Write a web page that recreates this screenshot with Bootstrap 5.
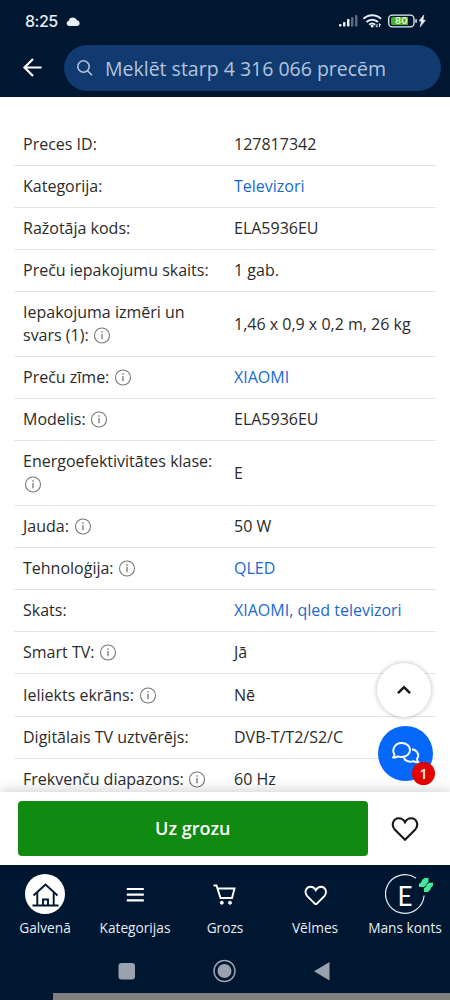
<!DOCTYPE html>
<html lang="lv">
<head>
<meta charset="utf-8">
<meta name="viewport" content="width=device-width, initial-scale=1">
<title>Preces apraksts</title>
<link href="https://cdn.jsdelivr.net/npm/bootstrap@5.3.0/dist/css/bootstrap.min.css" rel="stylesheet">
<style>
body{font-family:"Open Sans","Noto Sans",sans-serif;font-size:16px;color:#2b2b2b;background:#fff}
svg{display:block;flex:none}
.app{height:1000px}
.navy{background:#001731}
.top-area{height:97px}
.status{height:42px;padding:0 24px 0 25px;color:#e9eef6}
.clock{font-family:Inter,sans-serif;font-weight:500;font-size:16px;letter-spacing:-.5px;line-height:20px}
.searchrow{height:52px;padding:0 9px 0 22px}
.search{height:46px;background:#103a70;color:#b3c4de;font-size:19.5px;padding-left:12px;margin-left:21px}
.search span{padding-top:2px;margin-left:11px}
.specs{padding:26.85px 14px 0}
.spec{min-height:42.07px;border-bottom:1px solid #e4e4e4;padding:0 9px;line-height:23px}
.spec.tall{min-height:65px}
.spec-name{width:211px}
.spec a{color:#1a69d2}
.info{display:inline-block;vertical-align:-3px;margin-left:.5px}
.buybar{height:73px;padding:0 31px 0 18px;box-shadow:0 -2px 12px rgba(0,0,0,.18);z-index:2}
.buy{width:349.5px;height:55px;border-radius:4px;background:#108a10;color:#fff;font-weight:600;font-size:18px;border:0}
.float-btns{right:17px;bottom:11px;z-index:1}
.up{width:54px;height:54px;background:#fff;box-shadow:0 0 5px rgba(0,0,0,.28);margin-right:2px}
.chat{width:55px;height:55px;background:#0667fb;margin-top:9px}
.count{width:23px;height:23px;right:-2px;bottom:-4px;background:#e60000;font-size:14px;font-weight:600;line-height:23px}
.tabs{height:79px;color:#e6edf6;font-size:13.7px}
.tab-cell{width:90px;padding-top:9px}
.tab-ico{height:40px;width:40px}
.tab-cell span{line-height:20px;margin-top:4px;white-space:nowrap}
.sys{height:49px;padding-top:3px}
.strip{height:7px;background:#808080;margin-left:53px}
</style>
</head>
<body>
<div class="app d-flex flex-column overflow-hidden">
  <header class="navy top-area flex-shrink-0">
    <div class="status d-flex align-items-center">
      <span class="clock">8:25</span>
      <svg class="ms-2" width="15" height="9" viewBox="0 0 15 9" fill="#e9eef6"><path d="M3 9a2.7 2.7 0 0 1-.3-5.3A4.4 4.4 0 0 1 11 3.300A2.900 2.900 0 0 1 11.500 9z"/></svg>
      <div class="ms-auto d-flex align-items-center">
        <svg width="88" height="18" viewBox="0 0 88 18">
          <g fill="#e9eef6"><rect x="1" y="12" width="2.500" height="2.500" rx=".8"/><rect x="5" y="10" width="2.500" height="4.500" rx=".8"/><rect x="9" y="7" width="2.500" height="7.500" rx=".8"/></g>
          <g fill="#59697e"><rect x="13" y="5" width="2.500" height="9.500" rx=".8"/><rect x="17" y="3" width="2.500" height="11.500" rx=".8"/></g>
          <g fill="none" stroke="#e9eef6" stroke-width="2"><path d="M25.500 6.800a12.500 12.500 0 0 1 17.500 0M28.500 10a8.200 8.200 0 0 1 11.500 0M31.200 12.700a4.300 4.300 0 0 1 6 0"/></g><circle cx="34.200" cy="14" r="1.500" fill="#e9eef6"/><path d="M39 12v3M37.600 13.800l1.400 1.500M41.500 15v-3.300M41.500 11.500l1.400 1.600" stroke="#e9eef6" stroke-width="1"/>
          <rect x="50.700" y="3.200" width="25.300" height="11.600" rx="3.500" fill="none" stroke="#e9eef6" stroke-width="1.300"/>
          <path d="M55 5h15v8H55a2 2 0 0 1-2-2V7a2 2 0 0 1 2-2z" fill="#44b522"/><rect x="77.300" y="7" width="1.500" height="4" rx=".7" fill="#e9eef6"/>
          <text x="63.300" y="12.400" text-anchor="middle" font-family="Inter,sans-serif" font-size="9.500" font-weight="600" fill="#f1f8e9">80</text>
          <path d="M85.800 3 81 9h2.500L82.200 14.800 87.400 8.300H85z" fill="#e9eef6" stroke="#e9eef6" stroke-width=".6"/>
        </svg>
      </div>
    </div>
    <div class="searchrow d-flex align-items-center">
      <svg width="21" height="20" viewBox="0 0 21 20" fill="none" stroke="#fff" stroke-width="2.200"><path d="M19.500 9.500H3M11 1 2.500 9.500l8.500 8.500"/></svg>
      <div class="search rounded-pill flex-grow-1 d-flex align-items-center">
        <svg width="18" height="18" viewBox="0 0 18 18" fill="none" stroke="#b3c4de" stroke-width="1.600"><circle cx="7.500" cy="7.500" r="5.700"/><path d="m11.500 11.700 4.500 4.500"/></svg>
        <span class="text-nowrap">Meklēt starp 4 316 066 precēm</span>
      </div>
    </div>
  </header>

  <main class="flex-grow-1 position-relative overflow-hidden">
    <div class="specs" id="specs"></div>
    <div class="float-btns position-absolute d-flex flex-column align-items-end">
      <div class="up rounded-circle d-flex align-items-center justify-content-center"><svg width="16" height="10" viewBox="0 0 16 10" fill="none" stroke="#161616" stroke-width="2.500"><path d="m2 8.200 6-6 6 6"/></svg></div>
      <div class="chat rounded-circle d-flex align-items-center justify-content-center position-relative">
        <svg width="30" height="25" viewBox="0 0 30 25" fill="none" stroke="#fff" stroke-width="1.900" stroke-linejoin="round"><path d="M2 16.500c1.200-1 1.500-2 1.400-3C.5 8.500 4 2 10.500 2c5 0 8.500 3 8.500 7s-3.500 7-8.500 7c-1.500 0-2.500-.2-3.500-.6-1.500.9-3 1.300-5 1.100z"/><path d="M21 8.200c5 .5 8 5.500 5 9.600-.1 1.200.4 2.300 1.500 3.400-2 .2-3.500-.2-5-1.100-4 1.500-8.500 0-9.700-3.500"/></svg>
        <span class="count position-absolute rounded-circle text-white text-center">1</span>
      </div>
    </div>
  </main>

  <section class="buybar flex-shrink-0 bg-white d-flex align-items-center justify-content-between position-relative">
    <button class="buy btn p-0">Uz grozu</button>
    <svg width="28" height="26" viewBox="0 0 28 26" fill="none" stroke="#161616" stroke-width="2.100"><path d="M14 23.800 3.500 13.200C0 9 2.300 2.300 7.800 2.300c2.700 0 4.900 1.500 6.200 4 1.300-2.500 3.500-4 6.200-4 5.500 0 7.800 6.700 4.300 10.900z"/></svg>
  </section>

  <footer class="navy flex-shrink-0">
    <nav class="tabs d-flex">
      <div class="tab-cell d-flex flex-column align-items-center"><div class="tab-ico rounded-circle bg-white d-flex align-items-center justify-content-center"><svg width="28" height="26" viewBox="0 0 28 26" fill="none" stroke="#001731" stroke-width="1.900"><path d="m2.500 14.500 12-11 12 11M6.300 11.500v12.300M22.700 11.500v12.300M1.500 24.500h26M12 24v-5.500h5V24"/></svg></div><span>Galvenā</span></div>
      <div class="tab-cell d-flex flex-column align-items-center"><div class="tab-ico d-flex align-items-center justify-content-center"><svg width="18" height="16" viewBox="0 0 18 16" stroke="#fff" stroke-width="2.200"><path d="M.8 3h17M.8 8.700h17M.8 14.400h17"/></svg></div><span>Kategorijas</span></div>
      <div class="tab-cell d-flex flex-column align-items-center"><div class="tab-ico d-flex align-items-center justify-content-center"><svg width="24" height="22" viewBox="0 0 24 22" fill="none" stroke="#fff" stroke-width="1.900"><path d="M.5 2.500h3L7.500 15H19l2.500-9.500h-17"/><circle cx="8.800" cy="19.700" r="1.500" fill="#fff" stroke-width="1"/><circle cx="17" cy="19.700" r="1.500" fill="#fff" stroke-width="1"/></svg></div><span>Grozs</span></div>
      <div class="tab-cell d-flex flex-column align-items-center"><div class="tab-ico d-flex align-items-center justify-content-center"><svg width="24" height="22" viewBox="0 0 24 22" fill="none" stroke="#fff" stroke-width="1.900"><path d="M12.800 21.700 4 12.800C1 9.200 3 3.700 7.500 3.700c2.300 0 4.200 1.300 5.300 3.400 1.100-2.100 3-3.400 5.300-3.400 4.500 0 6.300 5.500 3.500 9.100z"/></svg></div><span>Vēlmes</span></div>
      <div class="tab-cell d-flex flex-column align-items-center"><div class="tab-ico"><svg width="50" height="40" viewBox="0 0 50 40"><path d="M31 4.200A19.300 19.300 0 1 0 39.100 21.500" fill="none" stroke="#e6edf6" stroke-width="1.200"/><text x="20" y="32.300" text-anchor="middle" font-family="Lato,sans-serif" font-size="26" fill="#fff">E</text><g fill="#46e696"><path d="M34 13V9.800l1.300-.6L37.500 5.500 39.500 4h4v4.300l-1.500.6-1.500 3L38.500 13z"/><path d="M48 8.800V12l-1.300.7-2 3.800-2 1.500H39v-4.200l1.500-.6 1.500-3.200 2-1.200z"/></g></svg></div><span>Mans konts</span></div>
    </nav>
    <div class="sys d-flex">
      <svg class="w-100" height="48" viewBox="0 0 450 48" fill="#99a2ad"><rect x="118.500" y="16" width="16.500" height="16.500" rx="3"/><circle cx="224.500" cy="24" r="7"/><circle cx="224.500" cy="24" r="10.500" fill="none" stroke="#99a2ad" stroke-width="1.500"/><path d="M314 24.300 329.500 15v18.500z"/></svg>
    </div>
    <div class="strip"></div>
  </footer>
</div>
<script>
const rows = [
  ["Preces ID:", "127817342"],
  ["Kategorija:", "Televizori", {link:1}],
  ["Ražotāja kods:", "ELA5936EU"],
  ["Preču iepakojumu skaits:", "1 gab."],
  ["Iepakojuma izmēri un<br>svars (1):", "1,46 x 0,9 x 0,2 m, 26 kg", {info:1, tall:1}],
  ["Preču zīme:", "XIAOMI", {info:1, link:1}],
  ["Modelis:", "ELA5936EU", {info:1}],
  ["Energoefektivitātes klase:<br>", "E", {info:1, tall:1, flush:1}],
  ["Jauda:", "50 W", {info:1}],
  ["Tehnoloģija:", "QLED", {info:1, link:1}],
  ["Skats:", "XIAOMI, qled televizori", {link:1}],
  ["Smart TV:", "Jā", {info:1}],
  ["Ieliekts ekrāns:", "Nē", {info:1}],
  ["Digitālais TV uztvērējs:", "DVB-T/T2/S2/C"],
  ["Frekvenču diapazons:", "60 Hz", {info:1}]
];
const info = '<svg class="info" width="18" height="17" viewBox="0 0 18 17" fill="none" stroke="#777"><circle cx="9" cy="8.500" r="7.500" stroke-width="1.100"/><path d="M9 7v5.300" stroke-width="1.300"/><path d="M9 4.300v1.500" stroke-width="1.400"/></svg>';
document.getElementById("specs").innerHTML = rows.map(([k, v, o = {}]) =>
  `<div class="spec d-flex align-items-center${o.tall ? " tall" : ""}"><div class="spec-name text-nowrap">${k}${o.info ? (o.flush ? "" : " ") + info : ""}</div><div class="text-nowrap">${o.link ? `<a href="#" class="text-decoration-none">${v}</a>` : v}</div></div>`).join("");
</script>
<script src="https://cdn.jsdelivr.net/npm/bootstrap@5.3.0/dist/js/bootstrap.bundle.min.js"></script>
</body>
</html>
